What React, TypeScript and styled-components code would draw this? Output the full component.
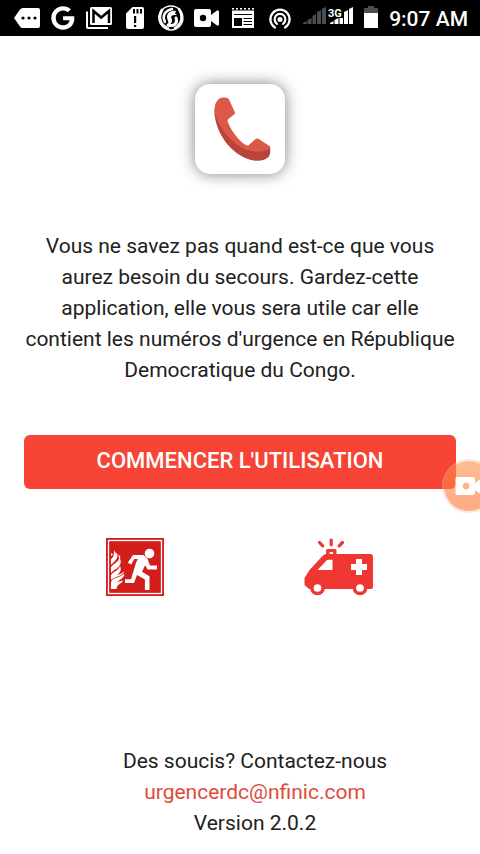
import React from "react";
import styled, { createGlobalStyle } from "styled-components";

const GlobalStyle = createGlobalStyle`
  * { box-sizing: border-box; }
  body { margin: 0; background: #fff; color: #212121; font-family: Roboto, "Open Sans", sans-serif; }
`;

const Screen = styled.div`
  min-height: 100vh;
  display: flex;
  flex-direction: column;
`;

const StatusBar = styled.header`
  height: 36px;
  padding: 0 12px 0 9px;
  display: flex;
  align-items: center;
  justify-content: space-between;
  background: #000;
  color: #fff;
`;

const StatusGroup = styled.div<{ $gap?: number }>`
  display: flex;
  align-items: center;
  gap: ${(p) => p.$gap ?? 0}px;
`;

const Glyph = styled.svg<{ $w: number }>`
  display: block;
  flex: none;
  width: ${(p) => p.$w}px;
  height: 36px;
  fill: #fff;
`;

const Clock = styled.time`
  padding-top: 2px;
  font-size: 21px;
  line-height: 34px;
  font-weight: 500;
  white-space: nowrap;
`;

const Content = styled.main`
  flex: 1;
  padding: 48px 24px 0;
  display: flex;
  flex-direction: column;
  align-items: center;
`;

const LogoCard = styled.div`
  width: 90px;
  height: 90px;
  border-radius: 15px;
  background: #fff;
  box-shadow: 0 0 15px rgba(0, 0, 0, 0.5);
`;

const Intro = styled.p`
  margin: 57px 0 49px;
  font-size: 21px;
  line-height: 31px;
  text-align: center;
`;

const StartButton = styled.button`
  width: 100%;
  height: 54px;
  padding: 0 0 3px;
  border: 0;
  border-radius: 6px;
  background: #f74437;
  color: #fff;
  font: 500 22px/31px Roboto, sans-serif;
  text-transform: uppercase;
  cursor: pointer;
`;

const Pictograms = styled.div`
  width: 100%;
  margin-top: 49px;
  padding: 0 15px 0 9px;
  display: grid;
  grid-template-columns: 1fr 1fr;
  justify-items: center;
`;

const Picture = styled.svg<{ $w: number; $h: number }>`
  display: block;
  width: ${(p) => p.$w}px;
  height: ${(p) => p.$h}px;
`;

const Footer = styled.footer`
  padding: 0 0 15px 30px;
  font-size: 21px;
  line-height: 31px;
  text-align: center;
`;

const Line = styled.div``;

const MailLink = styled.a`
  color: #e04a3a;
  text-decoration: none;
`;

const Recorder = styled.button`
  position: fixed;
  right: -14px;
  top: 461px;
  width: 50px;
  height: 50px;
  padding: 0;
  border: 0;
  border-radius: 50%;
  background: linear-gradient(rgba(253, 145, 75, 0.6), rgba(253, 115, 50, 0.6));
  box-shadow: 0 0 0 2px rgba(248, 190, 165, 0.4);
`;

const FireExit = () => (
  <Picture $w={58} $h={58} viewBox="0 0 58 58" role="img" aria-label="Sortie de secours">
    <rect width="58" height="58" fill="#d21d1b" />
    <rect x="2.5" y="2.5" width="53" height="53" fill="none" stroke="#fff" strokeWidth="1.3" />
    <g fill="#fff">
      <circle cx="43.5" cy="15.5" r="4.8" />
      <path d="M27 17h10.500l4 3.500 2.500 7H51v4h-9.500l-2.300-4.300-3.200 6.500 7.500 4.500V52h-4.600V41.500L31 37l-3 8H19v-3.800h6l5-16.500 1.800-3.700h-3.500l-3 5.500-3.500-1.800z" />
      <path d="M5 51V44C7 39 12 41 18.500 35.500 18 40 14 42 11 43.500c3 0 4-.2 6.500-1C15 46 11 46 10.500 51z" />
      <path d="M5 42V37c3-4 7-4 9-9 2 4 0 7-3 9 3-.5 5-1.500 7.500-4C16 39 9 38 5 42z" />
      <path d="M5 35V29c3-4 7-4 8.500-9.500C16.500 25 13.500 28 11 30.500 8 32 6.500 33 5 35z" />
      <path d="M5 27V21c4-3 2-5 3.500-9C9 15 10 15 11 15.500c1.500 4-1 6-2.500 8C7 25 6 25.500 5 27z" />
      <path d="M5 18v-3l2 1.500zM12.500 16l2 3-1.500 2z" />
    </g>
  </Picture>
);

const Ambulance = () => (
  <Picture $w={70} $h={58} viewBox="0 0 70 58" role="img" aria-label="Ambulance">
    <g stroke="#ee3732" strokeWidth="3.2" strokeLinecap="round">
      <path d="M15.500 4.500l3.200 3.300M27.200 2v4.800M38.500 4.500l-3.300 3.300" />
    </g>
    <path fill="#ee3732" fillRule="evenodd" d="M22 16v-3.500a1.500 1.500 0 0 1 1.500-1.500h7.500a1.500 1.500 0 0 1 1.500 1.500V16H66a3 3 0 0 1 3 3v29.500a2.500 2.500 0 0 1-2.500 2.500H5L.5 47V40l5-8L18.500 18q1.800-2 3.500-2zm3.500-2v2h3.500v-2z" />
    <path fill="#fff" d="M13.500 32L22.500 22.500q1-.8 2-.8H28.500V32zM52 21h6v5h5v6h-5V37h-6v-5h-5V26h5z" />
    <g fill="#fff" stroke="#ee3732" strokeWidth="3.500">
      <circle cx="13.500" cy="50" r="5.600" />
      <circle cx="56" cy="50" r="5.600" />
    </g>
  </Picture>
);

const Handset = () => (
  <Picture $w={90} $h={90} viewBox="0 0 90 90" role="img" aria-label="Téléphone">
    <path fill="#b8443a" d="M19.300 25C19 48 36 71 56 76c8 1.800 14 .5 17.500-3 2-2.500 2-6 1.500-9.500C50 68 30 52 19.300 25z" />
    <path fill="#dc5849" d="M19.500 26C19.500 19 23 14 28 13.600q5-.6 6 2L39.800 28q.6 1.600-.8 2.600L33.500 35Q32 36.200 33 38.500C36.500 47 43 56 51 61.300q1.800 1 3.200-.5L60.500 55q1.500-1 3-.2L74.500 62q1.500 1.200 0 2.600C70 68 62 68.500 54 66.500 37 61.500 22 42 19.500 26z" />
  </Picture>
);

const NotificationIcons = () => (
  <StatusGroup aria-hidden="true">
    <Glyph $w={36} viewBox="0 0 36 36">
      <path d="M5 18l6-8.500q1-1.500 3-1.500h15q2 0 2 2v16q0 2-2 2H14q-2 0-3-1.500z" />
      <g fill="#000"><circle cx="14" cy="18" r="1.600" /><circle cx="20" cy="18" r="1.600" /><circle cx="26" cy="18" r="1.600" /></g>
    </Glyph>
    <Glyph $w={36} viewBox="0 0 36 36">
      <path transform="translate(6.300 5.800) scale(.0473)" d="M488 261.800C488 403.300 391.100 504 248 504 110.800 504 0 393.200 0 256S110.800 8 248 8c66.800 0 123 24.500 166.300 64.900l-67.500 64.900C258.500 52.600 94.300 116.600 94.300 256c0 86.500 69.100 156.600 153.700 156.600 98.200 0 135-70.400 140.800-106.900H248v-85.300h236.100c2.300 12.700 3.900 24.900 3.900 41.400z" />
    </Glyph>
    <Glyph $w={36} viewBox="0 0 36 36">
      <path d="M5 11.500h2V27h20v2H7q-2 0-2-2z" />
      <rect x="9" y="7" width="22" height="18" rx="1.500" />
      <path d="M12.500 23V11l7.700 6.500 7.800-6.500v12" fill="none" stroke="#000" strokeWidth="2.500" />
    </Glyph>
    <Glyph $w={36} viewBox="0 0 36 36">
      <path d="M9 13.500L15.500 7H25q2 0 2 2v18q0 2-2 2H11q-2 0-2-2z" />
      <path fill="#000" d="M16 9h2v4.500h-2zM19.500 9h2v4.500h-2zM23 9h2v4.500h-2zM17 16h2.200v7H17zM17 25h2.200v2H17z" />
    </Glyph>
    <Glyph $w={36} viewBox="0 0 36 36">
      <g fill="none" stroke="#fff" strokeLinecap="round">
        <circle cx="18" cy="18" r="12" strokeWidth="1.300" />
        <path d="M9 10C4 18 8 26 15 28.500" strokeWidth="3" />
        <path d="M19 9c-8 2-10 8-7 13" strokeWidth="2.500" />
        <path d="M26 9c4 6 4 14-4 19" strokeWidth="2.500" />
        <path d="M15 25c6 2 10-2 8-7" strokeWidth="3" />
      </g>
      <path d="M23 11c-5-1-9 2-9 6 0 3 2 4 1 8 4-1 5-4 3-8 1-2 3-2 6-2l-2-1.500z" />
    </Glyph>
    <Glyph $w={36} viewBox="0 0 36 36">
      <path d="M7 9h13q2 0 2 2v4l6-4.500q2-.5 2 1v13q0 1.500-2 1L22 21v4q0 2-2 2H7q-2 0-2-2V11q0-2 2-2z" />
      <circle cx="14" cy="18" r="3.200" fill="#000" />
    </Glyph>
    <Glyph $w={36} viewBox="0 0 36 36">
      <path d="M7 10.500h22V28H7z" />
      <path d="M7 8.800h22" stroke="#fff" strokeWidth="1.500" strokeDasharray="2 2" />
      <path d="M9 14.500h18M18.500 18.500h8.500M18.500 21.500h8.500M18.500 24.500h8.500" stroke="#000" strokeWidth="1.200" />
      <path fill="#000" d="M9 18h8v8H9z" />
    </Glyph>
    <Glyph $w={36} viewBox="0 0 36 36">
      <g fill="none" stroke="#fff" strokeWidth="2.200" strokeLinecap="round">
        <path d="M14 27.500a9.600 9.600 0 1 1 10 0M16 23.800a5.400 5.400 0 1 1 6 0" />
      </g>
      <circle cx="19" cy="19.500" r="2.500" />
    </Glyph>
  </StatusGroup>
);

const Bars = ({ color }: { color: string }) => (
  <path fill={color} d="M0 24v-1l3.500-2v3zM4.500 24v-4l4-2v6zM9.500 24v-8l3.500-2v10zM14 24V12l4-2v14zM19 24V9l4-2v17z" />
);

const Radios = () => (
  <Glyph $w={50} viewBox="0 0 50 36" role="img" aria-label="3G">
    <Bars color="#4d4d4d" />
    <g transform="translate(27 0)"><Bars color="#fff" /></g>
    <path fill="#000" d="M24 6h16v12H24z" />
    <text x="25" y="17" fontSize="11" fontWeight="700" fontFamily="Roboto">3G</text>
  </Glyph>
);

const Battery = () => (
  <Glyph $w={14} viewBox="0 0 14 36" aria-hidden="true">
    <path fill="#4d4d4d" d="M0 13V8h4V6h6v2h4v5z" />
    <path d="M0 13h14v15H0z" />
  </Glyph>
);

export default function App() {
  return (
    <Screen>
      <GlobalStyle />
      <StatusBar>
        <NotificationIcons />
        <StatusGroup $gap={11}>
          <Radios />
          <Battery />
          <Clock>9:07 AM</Clock>
        </StatusGroup>
      </StatusBar>
      <Content>
        <LogoCard><Handset /></LogoCard>
        <Intro>
          Vous ne savez pas quand est-ce que vous aurez besoin du secours. Gardez-cette
          application, elle vous sera utile car elle contient les numéros d'urgence en République
          Democratique du Congo.
        </Intro>
        <StartButton type="button">Commencer l'utilisation</StartButton>
        <Pictograms>
          <FireExit />
          <Ambulance />
        </Pictograms>
      </Content>
      <Footer>
        <Line>Des soucis? Contactez-nous</Line>
        <Line><MailLink href="mailto:urgencerdc@nfinic.com">urgencerdc@nfinic.com</MailLink></Line>
        <Line>Version 2.0.2</Line>
      </Footer>
      <Recorder type="button" aria-label="Enregistrer l'écran">
        <Picture $w={50} $h={50} viewBox="0 0 50 50">
          <path fill="#fff" fillRule="evenodd" d="M13 16h16q2 0 2 2v4l7-5v17l-7-5v3q0 2-2 2H13q-1.500 0-1.500-2V18q0-2 1.500-2zm9 5.500a3.500 3.500 0 1 0 .1 0z" />
        </Picture>
      </Recorder>
    </Screen>
  );
}
